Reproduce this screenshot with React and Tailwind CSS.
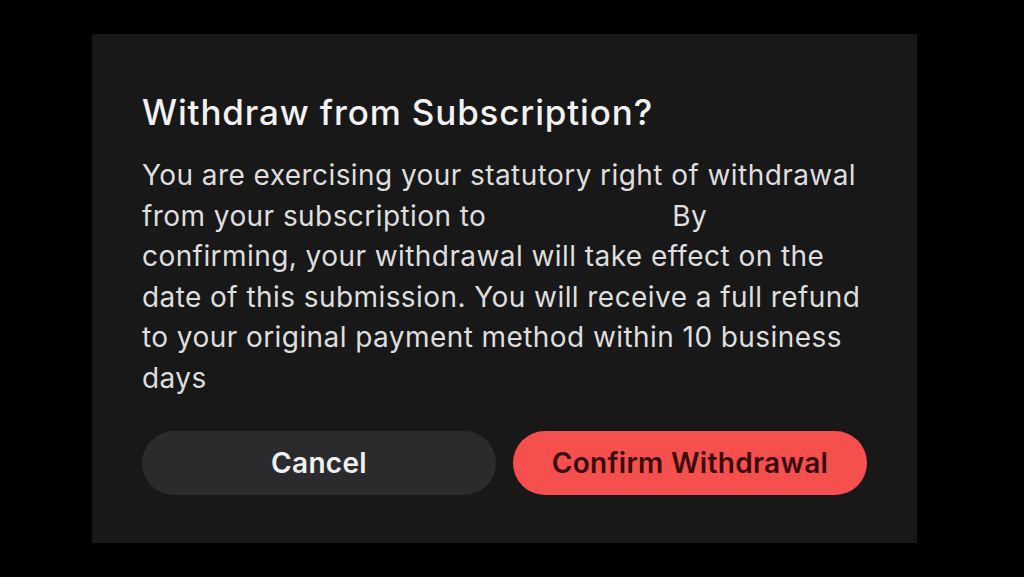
import React from 'react';

function App() {
  return (
    <div className="min-h-screen w-full bg-black pt-[34px] pl-[92px]" style={{ fontFamily: 'Inter, "Noto Sans", sans-serif' }}>
      <div className="w-[825px] h-[509px] bg-[#181818] px-[50px] pt-[58px]">
        {/* Title */}
        <h2 className="text-[35px] leading-[40px] font-medium text-[#f2f2f2] tracking-[0.85px]">
          Withdraw from Subscription?
        </h2>

        {/* Body */}
        <p className="mt-[23px] text-[28px] leading-[40.6px] text-[#dedede] tracking-[0.43px]">
          You are exercising your statutory right of withdrawal
          <br />
          from your subscription to
          <span className="inline-block w-[186px]" />
          By
          <br />
          confirming, your withdrawal will take effect on the
          <br />
          date of this submission. You will receive a full refund
          <br />
          to your original payment method within 10 business
          <br />
          days
        </p>

        {/* Actions */}
        <div className="mt-[32px] flex gap-[17px]">
          <button className="w-[354px] h-[64px] rounded-full bg-[#2b2b2e] text-[28px] font-semibold text-[#f0f0f0] tracking-[0.3px]">
            Cancel
          </button>
          <button className="w-[354px] h-[64px] rounded-full bg-[#f5504e] text-[28px] font-semibold text-[#3a0a0a] tracking-[0.3px]">
            Confirm Withdrawal
          </button>
        </div>
      </div>
    </div>
  );
}

export default App;
